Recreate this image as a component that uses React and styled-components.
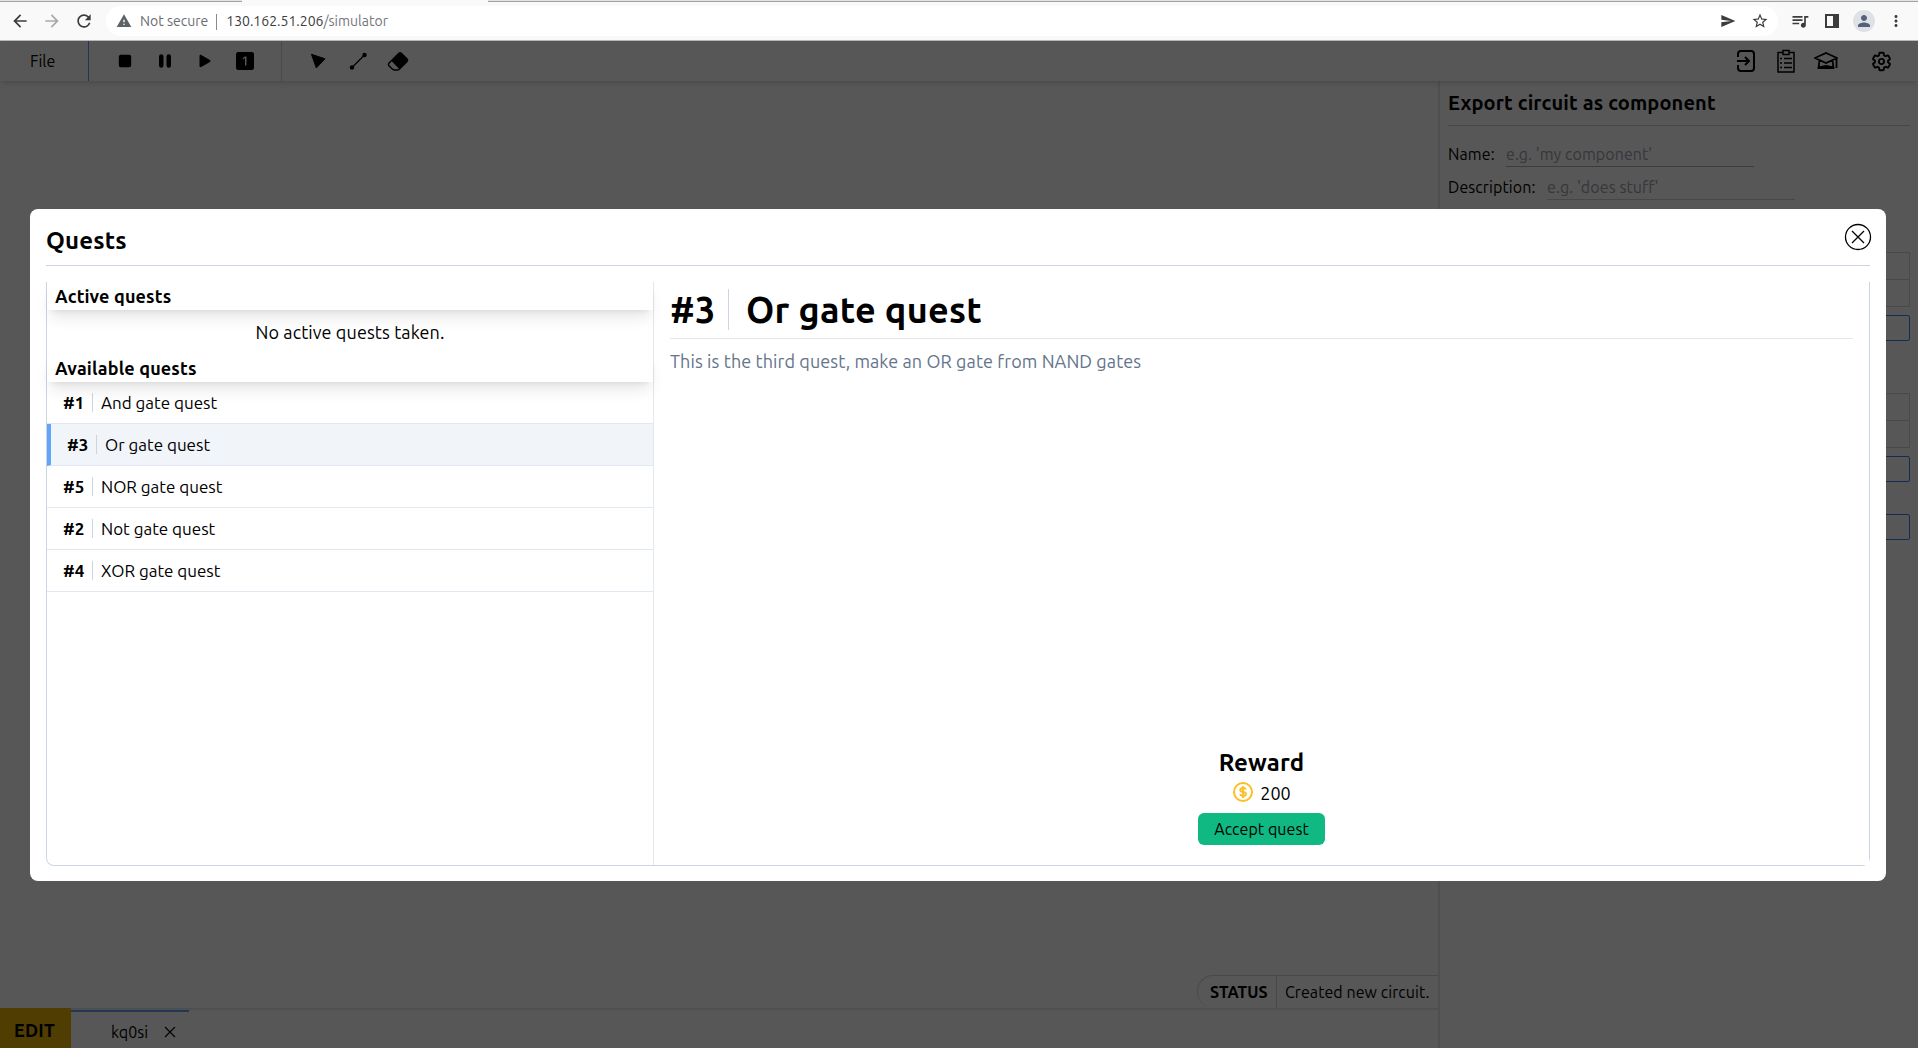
import React from 'react';
import styled, { createGlobalStyle } from 'styled-components';
import { BsStopFill, BsPauseFill, BsPlayFill, BsFill1SquareFill, BsEraserFill } from 'react-icons/bs';
import { MdArrowBack, MdArrowForward, MdRefresh, MdWarning, MdSend, MdStarBorder, MdQueueMusic, MdPerson, MdMoreVert } from 'react-icons/md';
import { IoSettingsOutline } from 'react-icons/io5';

const Global = createGlobalStyle`
  * { box-sizing: border-box; }
  html, body { margin: 0; height: 100%; overflow: hidden; }
  body { font-family: Ubuntu, "Noto Sans", "Open Sans", sans-serif; font-size: 16px; color: #000; background: #fff; }
`;

const T = styled.span`
  font-size: ${p => p.$s || 16}px;
  font-weight: ${p => (p.$b ? 700 : 400)};
  letter-spacing: ${p => p.$ls || 0}px;
  color: ${p => p.$c || 'inherit'};
  line-height: 1.25;
  white-space: nowrap;
`;

const Window = styled.div`
  width: 1918px; height: 1048px; display: flex; flex-direction: column; overflow: hidden;
`;

/* browser chrome */
const TabStrip = styled.div`
  height: 2px; flex: none; display: flex; justify-content: space-between; background: #fafafa;
`;
const TabEdge = styled.div`
  width: ${p => p.$w}px; height: 2px; background: #e4e4e4; border-bottom: 1px solid #a2a2a2;
`;
const AddressRow = styled.div`
  height: 39px; flex: none; display: flex; align-items: center; background: #f9f9f9; border-bottom: 1px solid #b9b9b9; color: #3c3c3c;
`;
const ChromeIcon = styled.span`
  width: ${p => p.$w || 32}px; display: flex; justify-content: center; color: ${p => p.$c || '#3c3c3c'};
`;
const NavIcons = styled.div`
  width: 106px; padding-left: 4px; display: flex;
`;
const Omnibox = styled.div`
  flex: 1; height: 30px; border-radius: 15px; background: #fff; display: flex; align-items: center; padding: 0 5px 0 9px;
`;
const UrlText = styled.div`
  margin-left: 7px; padding-top: 1px; display: flex; align-items: center;
`;
const Separator = styled.span`
  width: 1px; height: 16px; margin: 0 9px 0 8px; background: #8a8a8a;
`;
const Spacer = styled.div`flex: 1;`;
const ChromeMenu = styled.div`
  width: 140px; padding-left: 6px; display: flex; align-items: center;
`;
const Avatar = styled.span`
  width: 22px; height: 22px; margin: 0 5px; border-radius: 50%; background: #dee1e6; color: #55607a;
  display: flex; align-items: center; justify-content: center;
`;

/* simulator */
const Simulator = styled.div`
  height: 1007px; position: relative; display: flex; flex-direction: column;
`;
const Toolbar = styled.header`
  height: 40px; flex: none; display: flex; align-items: stretch; position: relative;
  box-shadow: 0 4px 6px -1px rgba(0,0,0,.1), 0 2px 4px -2px rgba(0,0,0,.1);
`;
const FileMenu = styled.div`
  width: 89px; padding-left: 30px; display: flex; align-items: center; border-right: 1px solid #60a5fa;
`;
const ToolGroup = styled.div`
  display: flex; padding: 0 16px; ${p => p.$line && 'border-right: 1px solid #d1d5db;'}
`;
const HeaderActions = styled.div`
  display: flex; padding-right: 17px;
`;
const Tool = styled.span`
  width: 40px; margin-left: ${p => p.$gap || 0}px; display: flex; align-items: center; justify-content: center;
`;
const GearIcon = styled(IoSettingsOutline)`
  path { stroke-width: 46px; }
`;
const Workspace = styled.div`
  flex: 1; display: flex;
`;
const Main = styled.main`
  width: 1438px; display: flex; flex-direction: column;
`;
const Canvas = styled.div`
  flex: 1; display: flex; align-items: flex-end; justify-content: flex-end;
`;
const Status = styled.div`
  height: 33px; width: 241px; display: flex; border: 1px solid #d1d5db; border-width: 1px 0 0 1px; border-radius: 16px 0 0 16px;
`;
const StatusLabel = styled.div`
  width: 79px; padding: 0 0 1px 12px; display: flex; align-items: center; border-right: 1px solid #cbd5e1;
`;
const StatusText = styled.div`
  padding: 0 0 1px 8px; display: flex; align-items: center;
`;
const Footer = styled.footer`
  height: 40px; display: flex;
`;
const Mode = styled.div`
  width: 71px; background: #eab308; display: flex; align-items: center; justify-content: center; padding: 5px 2px 0 0;
`;
const Tabs = styled.div`
  flex: 1; border-top: 2px solid #e5e7eb; display: flex;
`;
const Tab = styled.div`
  width: 118px; border-top: 2px solid #60a5fa; padding: 3px 13px 0 40px; display: flex; align-items: center; justify-content: space-between;
`;
const Side = styled.aside`
  width: 480px; border-left: 2px solid #e5e7eb; padding: 0 8px; display: flex; flex-direction: column;
`;
const SideTitle = styled.div`
  height: 45px; padding-bottom: 2px; display: flex; align-items: center; border-bottom: 1px solid #cbd0d8;
`;
const Field = styled.div`
  display: flex; align-items: flex-end; height: 33px; margin-top: ${p => p.$mt || 0}px;
`;
const FieldLabel = styled.label`
  width: ${p => p.$w}px; height: 28px; display: flex; align-items: center; padding-top: 1px;
`;
const Input = styled.div`
  width: 248px; height: 28px; border-bottom: 1px solid ${p => p.$line}; display: flex; align-items: center; padding-top: 2px;
`;
const PinTable = styled.div`
  margin-top: ${p => p.$mt}px; border: 1px solid #d1d5db; height: 55px; display: grid; grid-template-rows: 27px 26px;
`;
const PinRow = styled.div`
  &:first-child { border-bottom: 1px solid #d1d5db; }
`;
const SideButton = styled.div`
  margin-top: ${p => p.$mt}px; height: 26px; border: 1px solid #3b82f6; border-radius: 2px;
`;

/* dialog */
const Overlay = styled.div`
  position: absolute; inset: 0; background: rgba(0,0,0,.66); padding: 168px 32px 0 30px;
`;
const Dialog = styled.section`
  height: 672px; background: #fff; border-radius: 8px; padding: 0 16px 15px; display: flex; flex-direction: column;
`;
const DialogHead = styled.div`
  height: 57px; display: flex; align-items: flex-end; justify-content: space-between; border-bottom: 1px solid #cbd5e1; padding-bottom: 9px;
`;
const Close = styled.span`
  display: flex; margin: 0 -2px 5px 0;
`;
const Body = styled.div`
  margin-top: 16px; flex: 1; display: flex; border: 1px solid #cbd5e1; border-top: 0; border-radius: 0 0 8px 8px;
`;
const List = styled.div`
  width: 607px; border-right: 1px solid #e2e8f0;
`;
const ListHead = styled.div`
  position: relative; z-index: 1; height: 28px; padding-left: 8px; display: flex; align-items: center; background: #fff;
  box-shadow: 0 10px 15px -3px rgba(0,0,0,.1), 0 4px 6px -4px rgba(0,0,0,.1);
`;
const Empty = styled.div`
  height: 44px; padding-top: 1px; display: flex; align-items: center; justify-content: center;
`;
const QuestRow = styled.div`
  position: relative; z-index: ${p => (p.$on ? 2 : 0)};
  height: 42px; padding: 11px 16px; display: flex; border-bottom: 1px solid #e2e8f0;
  background: ${p => (p.$on ? '#f1f5f9' : '#fff')};
  ${p => p.$on && 'border-left: 4px solid #60a5fa;'}
`;
const QuestNo = styled.div`
  width: 30px; height: 19px; display: flex; align-items: center; border-right: 1px solid #cbd5e1;
`;
const QuestName = styled.div`
  height: 19px; padding-left: 8px; display: flex; align-items: center;
`;
const Detail = styled.div`
  flex: 1; padding: 7px 16px 20px; display: flex; flex-direction: column; background: #fff;
`;
const DetailHead = styled.div`
  height: 50px; display: flex; border-bottom: 1px solid #e2e8f0;
`;
const DetailNo = styled.div`
  width: 59px; height: 41px; display: flex; align-items: center; border-right: 1px solid #cbd5e1;
`;
const DetailName = styled.div`
  height: 41px; padding-left: 17px; display: flex; align-items: center;
`;
const Description = styled.div`
  padding-top: 11px; flex: 1;
`;
const Reward = styled.div`
  display: flex; flex-direction: column; align-items: center;
`;
const Amount = styled.div`
  height: 31px; display: flex; align-items: center; gap: 7px; padding-left: 1px;
`;
const Coin = styled.span`
  display: flex; color: #fbbf24; padding-bottom: 3px;
`;
const Accept = styled.div`
  margin-top: 4px; width: 127px; height: 32px; border-radius: 6px; background: #10b981; display: flex; align-items: center; justify-content: center;
`;

const Svg = ({ w, h = w, children, sw = 1.5 }) => (
  <svg width={w} height={h} viewBox={`0 0 ${w} ${h}`} fill="none" stroke="currentColor" strokeWidth={sw}>{children}</svg>
);

const quests = [
  ['#1', 'And gate quest'],
  ['#3', 'Or gate quest'],
  ['#5', 'NOR gate quest'],
  ['#2', 'Not gate quest'],
  ['#4', 'XOR gate quest'],
];

export default function App() {
  return (
    <Window>
      <Global />
      <TabStrip><TabEdge $w={242} /><TabEdge $w={1430} /></TabStrip>
      <AddressRow>
        <NavIcons>
          <ChromeIcon><MdArrowBack size={20} /></ChromeIcon>
          <ChromeIcon $c="#a9a9a9"><MdArrowForward size={20} /></ChromeIcon>
          <ChromeIcon><MdRefresh size={20} /></ChromeIcon>
        </NavIcons>
        <Omnibox>
          <ChromeIcon $w={18} $c="#5f6368"><MdWarning size={16} /></ChromeIcon>
          <UrlText>
            <T $s={14} $c="#6a6d71">Not secure</T>
            <Separator />
            <T $s={14}>130.162.51.206</T><T $s={14} $c="#74777a">/simulator</T>
          </UrlText>
          <Spacer />
          <ChromeIcon $w={39}><MdSend size={16} /></ChromeIcon>
          <ChromeIcon $w={26}><MdStarBorder size={18} /></ChromeIcon>
        </Omnibox>
        <ChromeMenu>
          <ChromeIcon><MdQueueMusic size={20} /></ChromeIcon>
          <ChromeIcon><Svg w={14} sw={2}><path d="M1 1h12v12H1z" /><path d="M9 1h4v12H9z" fill="currentColor" /></Svg></ChromeIcon>
          <Avatar><MdPerson size={18} /></Avatar>
          <ChromeIcon><MdMoreVert size={18} /></ChromeIcon>
        </ChromeMenu>
      </AddressRow>

      <Simulator>
        <Toolbar>
          <FileMenu><T>File</T></FileMenu>
          <ToolGroup $line>
            <Tool><BsStopFill size={22} /></Tool>
            <Tool><BsPauseFill size={24} /></Tool>
            <Tool><BsPlayFill size={22} /></Tool>
            <Tool><BsFill1SquareFill size={18} /></Tool>
          </ToolGroup>
          <ToolGroup>
            <Tool><Svg w={18} sw={1}><path d="M2.500 2.300L16 6.800 7.300 16z" fill="currentColor" strokeLinejoin="round" /></Svg></Tool>
            <Tool><Svg w={18} sw={1.3}><path d="M3 15.500L15.500 3" /><circle cx="3" cy="15.500" r="2.200" fill="currentColor" stroke="none" /><circle cx="15.500" cy="3" r="2.200" fill="currentColor" stroke="none" /></Svg></Tool>
            <Tool><BsEraserFill size={22} /></Tool>
          </ToolGroup>
          <Spacer />
          <HeaderActions>
            <Tool><Svg w={20} h={24} sw={2}><path d="M2 8V5a3 3 0 0 1 3-3h10a3 3 0 0 1 3 3v14a3 3 0 0 1-3 3H5a3 3 0 0 1-3-3v-3M1 12h12M9 8l4 4-4 4" /></Svg></Tool>
            <Tool><Svg w={20} h={24} sw={1.500}><path d="M7 3.500H2V23h16V3.500h-5M7 1.500h6v4H7zM8 9.500h8M8 14h8M8 18.500h8M4 9.500h2M4 14h2M4 18.500h2" /></Svg></Tool>
            <Tool><Svg w={24} h={20} sw={1.800}><path d="M1 7l11-5 11 5-11 5zM5.500 9.500L4.500 17h15l-1-7.500M4.500 16.500l7.500-1.500 7.500 1.500M22.500 7v10" /></Svg></Tool>
            <Tool $gap={15}><GearIcon size={21} /></Tool>
          </HeaderActions>
        </Toolbar>
        <Workspace>
          <Main>
            <Canvas>
              <Status>
                <StatusLabel><T $b $ls={0.1}>STATUS</T></StatusLabel>
                <StatusText><T $ls={0.06}>Created new circuit.</T></StatusText>
              </Status>
            </Canvas>
            <Footer>
              <Mode><T $b $s={18} $ls={0.2}>EDIT</T></Mode>
              <Tabs>
                <Tab><T>kq0si</T><Svg w={12} sw={1.100}><path d="M1 1l10 10M11 1L1 11" /></Svg></Tab>
              </Tabs>
            </Footer>
          </Main>
          <Side>
            <SideTitle><T $b $s={20} $ls={0.14}>Export circuit as component</T></SideTitle>
            <Field $mt={8}><FieldLabel $w={58}><T $ls={0.1}>Name:</T></FieldLabel><Input $line="#a5b4cb"><T $c="#9ca3af" $ls={0.06}>e.g. 'my component'</T></Input></Field>
            <Field><FieldLabel $w={99}><T $ls={0.08}>Description:</T></FieldLabel><Input $line="#cbd0d8"><T $c="#9ca3af" $ls={0.08}>e.g. 'does stuff'</T></Input></Field>
            <PinTable $mt={52}><PinRow /><PinRow /></PinTable>
            <SideButton $mt={8} />
            <PinTable $mt={52}><PinRow /><PinRow /></PinTable>
            <SideButton $mt={8} />
            <SideButton $mt={32} />
          </Side>
        </Workspace>

        <Overlay>
          <Dialog>
            <DialogHead>
              <T $b $s={24} $ls={0.18}>Quests</T>
              <Close><Svg w={28} sw={1.300}><circle cx="14" cy="14" r="12.500" /><path d="M8 8l12 12M20 8L8 20" /></Svg></Close>
            </DialogHead>
            <Body>
              <List>
                <ListHead><T $b $s={18} $ls={0.15}>Active quests</T></ListHead>
                <Empty><T $s={18} $ls={0.1}>No active quests taken.</T></Empty>
                <ListHead><T $b $s={18} $ls={0.15}>Available quests</T></ListHead>
                {quests.map(([no, name]) => (
                  <QuestRow key={no} $on={no === '#3'}>
                    <QuestNo><T $b $s={17}>{no}</T></QuestNo>
                    <QuestName><T $s={17}>{name}</T></QuestName>
                  </QuestRow>
                ))}
              </List>
              <Detail>
                <DetailHead>
                  <DetailNo><T $b $s={36} $ls={0.3}>#3</T></DetailNo>
                  <DetailName><T $b $s={36} $ls={0.27}>Or gate quest</T></DetailName>
                </DetailHead>
                <Description><T $s={18} $ls={0.1} $c="#64748b">This is the third quest, make an OR gate from NAND gates</T></Description>
                <Reward>
                  <T $b $s={24} $ls={0.15}>Reward</T>
                  <Amount>
                    <Coin><Svg w={20} sw={2}><circle cx="10" cy="10" r="9" /><path d="M13 7.500C12.500 6.300 11.500 6 10 6 8.300 6 7.200 6.700 7.200 8c0 2.800 5.800 1.200 5.800 4 0 1.300-1.200 2-3 2-1.600 0-2.600-.500-3-1.700M10 4v12" strokeWidth="1.800" /></Svg></Coin>
                    <T $s={18}>200</T>
                  </Amount>
                  <Accept><T $ls={0.06}>Accept quest</T></Accept>
                </Reward>
              </Detail>
            </Body>
          </Dialog>
        </Overlay>
      </Simulator>
    </Window>
  );
}
